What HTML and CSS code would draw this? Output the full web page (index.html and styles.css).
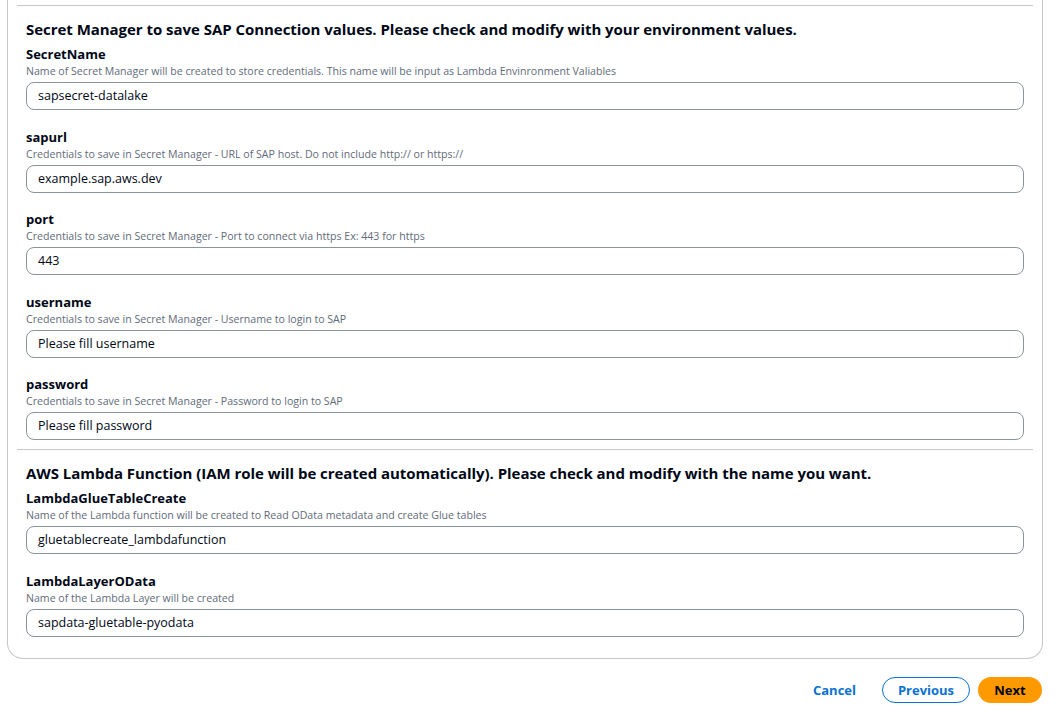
FILE: index.html
```html
<!DOCTYPE html>
<html>
<head>
<meta charset="utf-8">
<link rel="stylesheet" href="styles.css">
</head>
<body>
<div class="panel">
  <section class="section">
    <h2 class="section-title">Secret Manager to save SAP Connection values. Please check and modify with your environment values.</h2>
    <div class="field">
      <div class="label">SecretName</div>
      <div class="desc">Name of Secret Manager will be created to store credentials. This name will be input as Lambda Envinronment Valiables</div>
      <div class="input">sapsecret-datalake</div>
    </div>
    <div class="field">
      <div class="label">sapurl</div>
      <div class="desc">Credentials to save in Secret Manager - URL of SAP host. Do not include http:// or https://</div>
      <div class="input">example.sap.aws.dev</div>
    </div>
    <div class="field">
      <div class="label">port</div>
      <div class="desc">Credentials to save in Secret Manager - Port to connect via https Ex: 443 for https</div>
      <div class="input">443</div>
    </div>
    <div class="field">
      <div class="label">username</div>
      <div class="desc">Credentials to save in Secret Manager - Username to login to SAP</div>
      <div class="input">Please fill username</div>
    </div>
    <div class="field">
      <div class="label">password</div>
      <div class="desc">Credentials to save in Secret Manager - Password to login to SAP</div>
      <div class="input">Please fill password</div>
    </div>
  </section>
  <section class="section">
    <h2 class="section-title">AWS Lambda Function (IAM role will be created automatically). Please check and modify with the name you want.</h2>
    <div class="field">
      <div class="label">LambdaGlueTableCreate</div>
      <div class="desc">Name of the Lambda function will be created to Read OData metadata and create Glue tables</div>
      <div class="input">gluetablecreate_lambdafunction</div>
    </div>
    <div class="field">
      <div class="label">LambdaLayerOData</div>
      <div class="desc">Name of the Lambda Layer will be created</div>
      <div class="input">sapdata-gluetable-pyodata</div>
    </div>
  </section>
</div>
<div class="actions">
  <span class="btn-link">Cancel</span>
  <span class="btn btn-secondary">Previous</span>
  <span class="btn btn-primary">Next</span>
</div>
</body>
</html>
```

FILE: styles.css
```css
* { box-sizing: border-box; }
html, body { margin: 0; padding: 0; background: #ffffff; }
body {
  font-family: "Open Sans", "Noto Sans", sans-serif;
  color: #000716;
  width: 1058px;
  height: 714px;
  overflow: hidden;
}
.panel {
  margin-left: 7px;
  width: 1036px;
  border: 1px solid #c6c6cd;
  border-top: none;
  border-radius: 0 0 16px 16px;
  padding: 5px 9px 21px;
}
.section {
  border-top: 1px solid #c6c6cd;
  padding: 13px 9px 9px;
}
.section:last-child { padding-bottom: 0; }
.section-title {
  margin: 0 0 6px;
  font-size: 15px;
  line-height: 20px;
  font-weight: 700;
  letter-spacing: -0.04px;
}
.field + .field { margin-top: 17.5px; }
.label {
  font-size: 13px;
  line-height: 18px;
  font-weight: 700;
}
.desc {
  font-size: 10.6px;
  line-height: 16px;
  color: #5f6b7a;
}
.input {
  margin-top: 3px;
  height: 28px;
  border: 1px solid #8c939f;
  border-radius: 8px;
  padding: 0 11px;
  font-size: 12.5px;
  line-height: 26px;
  color: #000716;
}
.actions {
  display: flex;
  justify-content: flex-end;
  align-items: center;
  gap: 8px;
  padding: 18px 16px 0 0;
}
.btn-link {
  font-size: 13px;
  font-weight: 700;
  color: #0972d3;
  margin-right: 18px;
}
.btn {
  height: 26px;
  border-radius: 13px;
  font-size: 13px;
  font-weight: 700;
  display: flex;
  align-items: center;
  justify-content: center;
}
.btn-secondary {
  width: 88px;
  border: 1.5px solid #0972d3;
  color: #0972d3;
}
.btn-primary {
  width: 64px;
  background: #ff9900;
  color: #000716;
}
```
